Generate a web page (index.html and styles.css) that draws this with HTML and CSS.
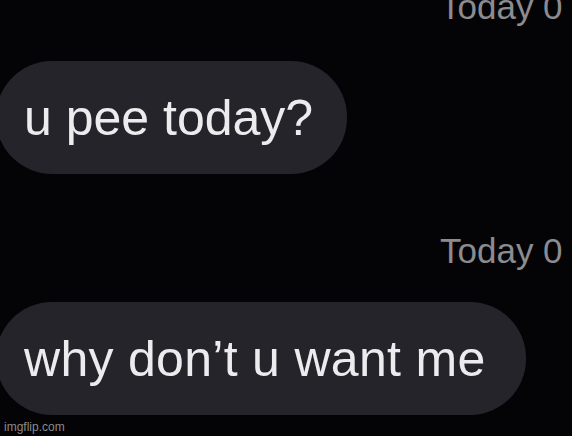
FILE: index.html
```html
<!DOCTYPE html>
<html>
<head>
<meta charset="utf-8">
<link rel="stylesheet" href="styles.css">
</head>
<body>
<div class="thread">
  <div class="stamp stamp-first">Today 0</div>
  <div class="bubble bubble-first">u pee today?</div>
  <div class="stamp stamp-second">Today 0</div>
  <div class="bubble bubble-second">why don’t u want me</div>
</div>
<div class="watermark">imgflip.com</div>
</body>
</html>
```

FILE: styles.css
```css
html, body {
  margin: 0;
  padding: 0;
  background: #040406;
  width: 572px;
  height: 436px;
  overflow: hidden;
  font-family: "Liberation Sans", Arial, sans-serif;
}
.thread {
  display: flex;
  flex-direction: column;
  align-items: flex-start;
  width: 572px;
  overflow: hidden;
}
.stamp {
  align-self: stretch;
  padding-left: 440px;
  font-size: 35px;
  line-height: 40px;
  color: #8b8b90;
  white-space: nowrap;
}
.stamp-first {
  margin-top: -13px;
}
.stamp-second {
  margin-top: 57px;
}
.bubble {
  margin-left: -4px;
  padding: 27px 34px 26px 28px;
  background: #25242b;
  color: #ececef;
  font-size: 50px;
  line-height: 60px;
  border-radius: 56px;
  white-space: nowrap;
}
.bubble-first {
  margin-top: 34px;
}
.bubble-second {
  margin-top: 31px;
  padding-right: 40px;
  letter-spacing: 0.3px;
}
.watermark {
  position: absolute;
  left: 4px;
  bottom: 2px;
  font-size: 12px;
  color: #8a8a8a;
  font-family: "Liberation Sans", Arial, sans-serif;
}
```
